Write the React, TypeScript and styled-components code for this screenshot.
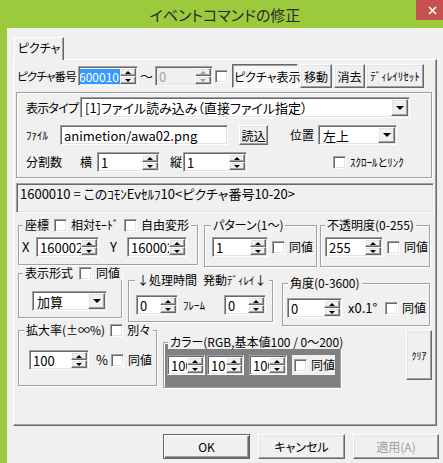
import React from 'react';
import styled, { createGlobalStyle, css } from 'styled-components';

const GlobalStyle = createGlobalStyle`
  html, body {
    margin: 0;
    padding: 0;
    background: #f0f0f0;
    overflow: hidden;
  }
  body {
    font-family: "Noto Sans CJK JP", "Noto Sans", sans-serif;
    font-size: 12px;
    color: #000;
    font-feature-settings: "palt";
  }
  * { box-sizing: border-box; }
`;

const raised = css`
  border: 1px solid;
  border-color: #fff #696969 #696969 #fff;
  box-shadow: inset -1px -1px 0 #a0a0a0, inset 1px 1px 0 #e3e3e3;
  background: #f0f0f0;
`;

const sunken = css`
  border: 1px solid;
  border-color: #a0a0a0 #fff #fff #a0a0a0;
  box-shadow: inset 1px 1px 0 #696969, inset -1px -1px 0 #e3e3e3;
`;

const etched = css`
  border: 1px solid #a0a0a0;
  box-shadow: inset 1px 1px 0 #fff, 1px 1px 0 #fff;
`;

const Window = styled.div`
  width: 443px;
  height: 463px;
  display: flex;
  flex-direction: column;
  overflow: hidden;
`;

const TitleBar = styled.div`
  height: 28px;
  flex: none;
  display: flex;
  align-items: flex-start;
  background: #9bcb3c;
`;

const TitleText = styled.div`
  flex: 1;
  padding-left: 34px;
  text-align: center;
  font-size: 15px;
  line-height: 29px;
  color: #2a2a2a;
`;

const CloseButton = styled.div`
  width: 27px;
  height: 20px;
  flex: none;
  display: flex;
  align-items: center;
  justify-content: center;
  padding-left: 5px;
  background: #c75050;
`;

const Frame = styled.div`
  flex: 1;
  display: flex;
`;

const LeftEdge = styled.div`
  width: 7px;
  flex: none;
  background: #9bcb3c;
`;

const Body = styled.div`
  flex: 1;
  display: flex;
  flex-direction: column;
  padding: 9px 0 0 6px;
`;

const TabStrip = styled.div`
  display: flex;
  height: 23px;
  padding-left: 1px;
  position: relative;
  z-index: 1;
`;

const Tab = styled.div`
  width: 50px;
  height: 23px;
  border-top: 1px solid #fff;
  border-left: 1px solid #fff;
  border-right: 1px solid #696969;
  box-shadow: inset -1px 0 0 #a0a0a0;
  background: #f0f0f0;
  text-align: center;
  line-height: 20px;
`;

const TabPanel = styled.div`
  width: 424px;
  height: 367px;
  margin-top: -1px;
  display: flex;
  flex-direction: column;
  border: 1px solid;
  border-color: #fff #696969 #696969 #fff;
  box-shadow: inset -1px -1px 0 #a0a0a0;
`;

const Row = styled.div<{ $h: number; $mt?: number; $ml?: number }>`
  display: flex;
  align-items: center;
  flex: none;
  height: ${p => p.$h}px;
  margin: ${p => p.$mt ?? 0}px 0 0 ${p => p.$ml ?? 0}px;
`;

const Label = styled.span<{ $w?: number; $ml?: number; $size?: number; $tight?: boolean }>`
  flex: none;
  white-space: nowrap;
  width: ${p => (p.$w ? `${p.$w}px` : 'auto')};
  margin-left: ${p => p.$ml ?? 0}px;
  font-size: ${p => p.$size ?? 12}px;
  line-height: 14px;
  letter-spacing: ${p => (p.$tight ? '-0.8px' : 'normal')};
`;

const SpinFrame = styled.div<{ $w: number; $ml?: number; $disabled?: boolean }>`
  ${sunken};
  flex: none;
  display: flex;
  width: ${p => p.$w}px;
  height: 20px;
  margin-left: ${p => p.$ml ?? 0}px;
  padding: 1px;
  background: ${p => (p.$disabled ? '#f0f0f0' : '#fff')};
`;

const SpinText = styled.div<{ $disabled?: boolean; $tail?: boolean }>`
  flex: 1;
  min-width: 0;
  overflow: hidden;
  display: flex;
  align-items: center;
  justify-content: ${p => (p.$tail ? 'flex-end' : 'flex-start')};
  padding-left: 2px;
  font-size: 13px;
  white-space: nowrap;
  color: ${p => (p.$disabled ? '#a0a0a0' : '#000')};
`;

const Selected = styled.span`
  background: #3399ff;
  color: #fff;
  font-size: 12px;
  line-height: 15px;
  padding-right: 1px;
`;

const SpinButtons = styled.div`
  width: 16px;
  flex: none;
  display: flex;
  flex-direction: column;
`;

const SpinButton = styled.div`
  ${raised};
  flex: 1;
  display: flex;
  align-items: center;
  justify-content: center;
`;

const Arrow = styled.span<{ $down?: boolean; $dim?: boolean }>`
  width: 0;
  height: 0;
  border-left: 3px solid transparent;
  border-right: 3px solid transparent;
  ${p =>
    p.$down
      ? css`border-top: 3px solid ${p.$dim ? '#a0a0a0' : '#000'};`
      : css`border-bottom: 3px solid ${p.$dim ? '#a0a0a0' : '#000'};`}
`;

function Spinner(props: { w: number; value: string; ml?: number; selected?: boolean; disabled?: boolean }) {
  return (
    <SpinFrame $w={props.w} $ml={props.ml} $disabled={props.disabled}>
      <SpinText $disabled={props.disabled} $tail={props.selected}>
        {props.selected ? <Selected>{props.value}</Selected> : props.value}
      </SpinText>
      <SpinButtons>
        <SpinButton><Arrow $dim={props.disabled} /></SpinButton>
        <SpinButton><Arrow $down $dim={props.disabled} /></SpinButton>
      </SpinButtons>
    </SpinFrame>
  );
}

const ComboFrame = styled.div<{ $w: number; $h?: number; $ml?: number }>`
  ${sunken};
  flex: none;
  display: flex;
  width: ${p => p.$w}px;
  height: ${p => p.$h ?? 20}px;
  margin-left: ${p => p.$ml ?? 0}px;
  padding: 1px;
  background: #fff;
`;

const ComboText = styled.div`
  flex: 1;
  min-width: 0;
  overflow: hidden;
  display: flex;
  align-items: center;
  padding-left: 3px;
  font-size: 13px;
  white-space: nowrap;
`;

const ComboButton = styled.div`
  ${raised};
  width: 17px;
  flex: none;
  display: flex;
  align-items: center;
  justify-content: center;
`;

const DropArrow = styled.span`
  width: 0;
  height: 0;
  border-left: 4px solid transparent;
  border-right: 4px solid transparent;
  border-top: 4px solid #000;
`;

function Combo(props: { w: number; h?: number; ml?: number; value: string }) {
  return (
    <ComboFrame $w={props.w} $h={props.h} $ml={props.ml}>
      <ComboText>{props.value}</ComboText>
      <ComboButton><DropArrow /></ComboButton>
    </ComboFrame>
  );
}

const TextField = styled.div<{ $w: number }>`
  ${sunken};
  flex: none;
  width: ${p => p.$w}px;
  height: 20px;
  padding: 0 3px;
  display: flex;
  align-items: center;
  background: #fff;
  font-size: 13px;
  white-space: nowrap;
`;

const Check = styled.span<{ $ml?: number }>`
  ${sunken};
  flex: none;
  display: inline-block;
  width: 13px;
  height: 13px;
  margin-left: ${p => p.$ml ?? 0}px;
  background: #fff;
`;

const Btn = styled.button<{
  $w: number;
  $h: number;
  $ml?: number;
  $mt?: number;
  $size?: number;
  $pressed?: boolean;
  $default?: boolean;
}>`
  ${raised};
  flex: none;
  width: ${p => p.$w}px;
  height: ${p => p.$h}px;
  margin: ${p => p.$mt ?? 0}px 0 0 ${p => p.$ml ?? 0}px;
  padding: 0;
  font-family: inherit;
  font-feature-settings: "palt";
  font-size: ${p => p.$size ?? 12}px;
  color: #000;
  white-space: nowrap;
  cursor: default;
  ${p =>
    p.$pressed &&
    css`
      border-color: #696969 #fff #fff #696969;
      box-shadow: inset 1px 1px 0 #a0a0a0;
      background: #f8f8f8;
      padding: 1px 0 0 1px;
    `}
  ${p =>
    p.$default &&
    css`
      border-color: #646464;
      box-shadow: inset 1px 1px 0 #fff, inset -1px -1px 0 #696969, inset -2px -2px 0 #a0a0a0;
    `}
  &:disabled {
    color: #a0a0a0;
  }
`;

const InnerBox = styled.div`
  ${etched};
  flex: none;
  width: 416px;
  height: 86px;
  margin: 4px 0 0 2px;
  display: flex;
  flex-direction: column;
  padding: 4px 0 0 9px;
`;

const InfoBox = styled.div`
  ${sunken};
  flex: none;
  width: 418px;
  height: 30px;
  margin: 5px 0 0 2px;
  padding: 2px 3px;
  font-size: 13px;
  line-height: 16px;
  white-space: nowrap;
`;

const GroupRow = styled.div<{ $h: number; $mt?: number }>`
  display: flex;
  align-items: flex-start;
  flex: none;
  height: ${p => p.$h}px;
  margin: ${p => p.$mt ?? 0}px 0 0 4px;
`;

const Group = styled.fieldset<{ $w: number; $h: number; $mt?: number; $ml?: number; $bg?: string }>`
  ${etched};
  flex: none;
  min-width: 0;
  width: ${p => p.$w}px;
  height: ${p => p.$h}px;
  margin: ${p => p.$mt ?? 0}px 0 0 ${p => p.$ml ?? 0}px;
  padding: 0;
  background: ${p => p.$bg ?? 'transparent'};
`;

const Legend = styled.legend<{ $ml?: number }>`
  display: flex;
  align-items: center;
  gap: 4px;
  height: 14px;
  margin-left: ${p => p.$ml ?? 4}px;
  padding: 0 2px;
  line-height: 14px;
  white-space: nowrap;
  background: #f0f0f0;
`;

const GroupBody = styled.div<{ $pt: number; $pl: number }>`
  display: flex;
  align-items: center;
  padding: ${p => p.$pt}px 0 0 ${p => p.$pl}px;
`;

const LightBox = styled.div<{ $ml?: number }>`
  flex: none;
  width: 43px;
  height: 20px;
  margin-left: ${p => p.$ml ?? 0}px;
  display: flex;
  align-items: center;
  background: #f0f0f0;
`;

const Footer = styled.div`
  display: flex;
  gap: 8px;
  margin-top: 8px;
  padding-left: 150px;
`;

export default function App(): JSX.Element {
  return (
    <Window>
      <GlobalStyle />
      <TitleBar>
        <TitleText>イベントコマンドの修正</TitleText>
        <CloseButton>
          <svg width="9" height="9" viewBox="0 0 9 9">
            <path d="M1 1L8 8M8 1L1 8" stroke="#fff" strokeWidth="1.6" />
          </svg>
        </CloseButton>
      </TitleBar>
      <Frame>
        <LeftEdge />
        <Body>
          <TabStrip>
            <Tab>ピクチャ</Tab>
          </TabStrip>
          <TabPanel>
            <Row $h={24} $mt={4} $ml={3}>
              <Label $w={61} $size={11.5} $tight>ピクチャ番号</Label>
              <Spinner w={60} value="1600010" selected />
              <Label $w={17} $size={13} style={{ textAlign: 'center' }}>〜</Label>
              <Spinner w={58} value="0" disabled />
              <Check $ml={2} />
              <Btn $w={66} $h={24} $ml={4} $pressed>ピクチャ表示</Btn>
              <Btn $w={32} $h={24} $ml={2}>移動</Btn>
              <Btn $w={31} $h={24} $ml={2}>消去</Btn>
              <Btn $w={58} $h={24} $ml={1} $size={11}>ﾃﾞｨﾚｲﾘｾｯﾄ</Btn>
            </Row>
            <InnerBox>
              <Row $h={21}>
                <Label $w={54} $tight>表示タイプ</Label>
                <Combo w={330} h={21} value="[1]ファイル読み込み（直接ファイル指定）" />
              </Row>
              <Row $h={20} $mt={7}>
                <Label $w={34} $size={11}>ﾌｧｲﾙ</Label>
                <TextField $w={168}>animetion/awa02.png</TextField>
                <Btn $w={29} $h={20} $ml={11}>読込</Btn>
                <Label $w={28} $ml={22}>位置</Label>
                <Combo w={79} value="左上" />
              </Row>
              <Row $h={20} $mt={7}>
                <Label $w={54}>分割数</Label>
                <Label $w={17}>横</Label>
                <Spinner w={63} value="1" />
                <Label $w={13} $ml={10}>縦</Label>
                <Spinner w={64} value="1" />
                <Check $ml={86} />
                <Label $ml={4} $size={11}>ｽｸﾛｰﾙとﾘﾝｸ</Label>
              </Row>
            </InnerBox>
            <InfoBox>1600010 = このｺﾓﾝEvｾﾙﾌ10&lt;ピクチャ番号10-20&gt;</InfoBox>

            <GroupRow $h={48} $mt={5}>
              <Group $w={180} $h={47}>
                <Legend>
                  座標<Check $ml={1} />相対ﾓｰﾄﾞ<Check $ml={1} />自由変形
                </Legend>
                <GroupBody $pt={5} $pl={3}>
                  <Label $w={14} $size={13}>X</Label>
                  <Spinner w={63} value="1600020" />
                  <Label $w={17} $ml={11} $size={13}>Y</Label>
                  <Spinner w={60} value="1600020" />
                </GroupBody>
              </Group>
              <Group $w={113} $h={49} $ml={6}>
                <Legend $ml={6}>パターン(1〜)</Legend>
                <GroupBody $pt={5} $pl={7}>
                  <Spinner w={56} value="1" />
                  <Check $ml={4} />
                  <Label $ml={4}>同値</Label>
                </GroupBody>
              </Group>
              <Group $w={110} $h={49} $ml={3}>
                <Legend>不透明度(0-255)</Legend>
                <GroupBody $pt={5} $pl={4}>
                  <Spinner w={58} value="255" />
                  <Check $ml={4} />
                  <Label $ml={4}>同値</Label>
                </GroupBody>
              </Group>
            </GroupRow>

            <GroupRow $h={57}>
              <Group $w={104} $h={52}>
                <Legend>
                  表示形式<Check $ml={2} />同値
                </Legend>
                <GroupBody $pt={11} $pl={13}>
                  <Combo w={75} value="加算" />
                </GroupBody>
              </Group>
              <Group $w={145} $h={49} $ml={6} $mt={7}>
                <Legend $ml={6}>
                  ↓処理時間<span style={{ marginLeft: 2 }}>発動<span style={{ fontSize: 11 }}>ﾃﾞｨﾚｲ</span>↓</span>
                </Legend>
                <GroupBody $pt={8} $pl={7}>
                  <Spinner w={42} value="0" />
                  <Label $w={41} $ml={5} $size={11}>ﾌﾚｰﾑ</Label>
                  <Spinner w={42} value="0" />
                </GroupBody>
              </Group>
              <Group $w={148} $h={50} $ml={9} $mt={10}>
                <Legend $ml={5}>角度(0-3600)</Legend>
                <GroupBody $pt={8} $pl={4}>
                  <Spinner w={55} value="0" />
                  <Label $w={37} $ml={6} $size={13}>x0.1°</Label>
                  <Check />
                  <Label $ml={4}>同値</Label>
                </GroupBody>
              </Group>
            </GroupRow>

            <GroupRow $h={66}>
              <Group $w={139} $h={63}>
                <Legend $ml={5}>
                  拡大率(±∞%)<Check $ml={1} />別々
                </Legend>
                <GroupBody $pt={13} $pl={10}>
                  <Spinner w={60} value="100" />
                  <Label $w={15} $ml={7} $size={13}>%</Label>
                  <Check />
                  <Label $ml={4}>同値</Label>
                </GroupBody>
              </Group>
              <Group $w={178} $h={53} $ml={6} $mt={12} $bg="#808080">
                <Legend>カラー(RGB,基本値100 / 0〜200)</Legend>
                <GroupBody $pt={6} $pl={3}>
                  <Spinner w={38} value="100" />
                  <Spinner w={37} value="100" ml={2} />
                  <Spinner w={38} value="100" ml={5} />
                  <LightBox $ml={5}>
                    <Check $ml={2} />
                    <Label $ml={4}>同値</Label>
                  </LightBox>
                </GroupBody>
              </Group>
              <Btn $w={26} $h={50} $ml={65} $mt={7} $size={10}>ｸﾘｱ</Btn>
            </GroupRow>
          </TabPanel>
          <Footer>
            <Btn $w={87} $h={25} $default>OK</Btn>
            <Btn $w={87} $h={25}>キャンセル</Btn>
            <Btn $w={86} $h={25} disabled>適用(A)</Btn>
          </Footer>
        </Body>
      </Frame>
    </Window>
  );
}
